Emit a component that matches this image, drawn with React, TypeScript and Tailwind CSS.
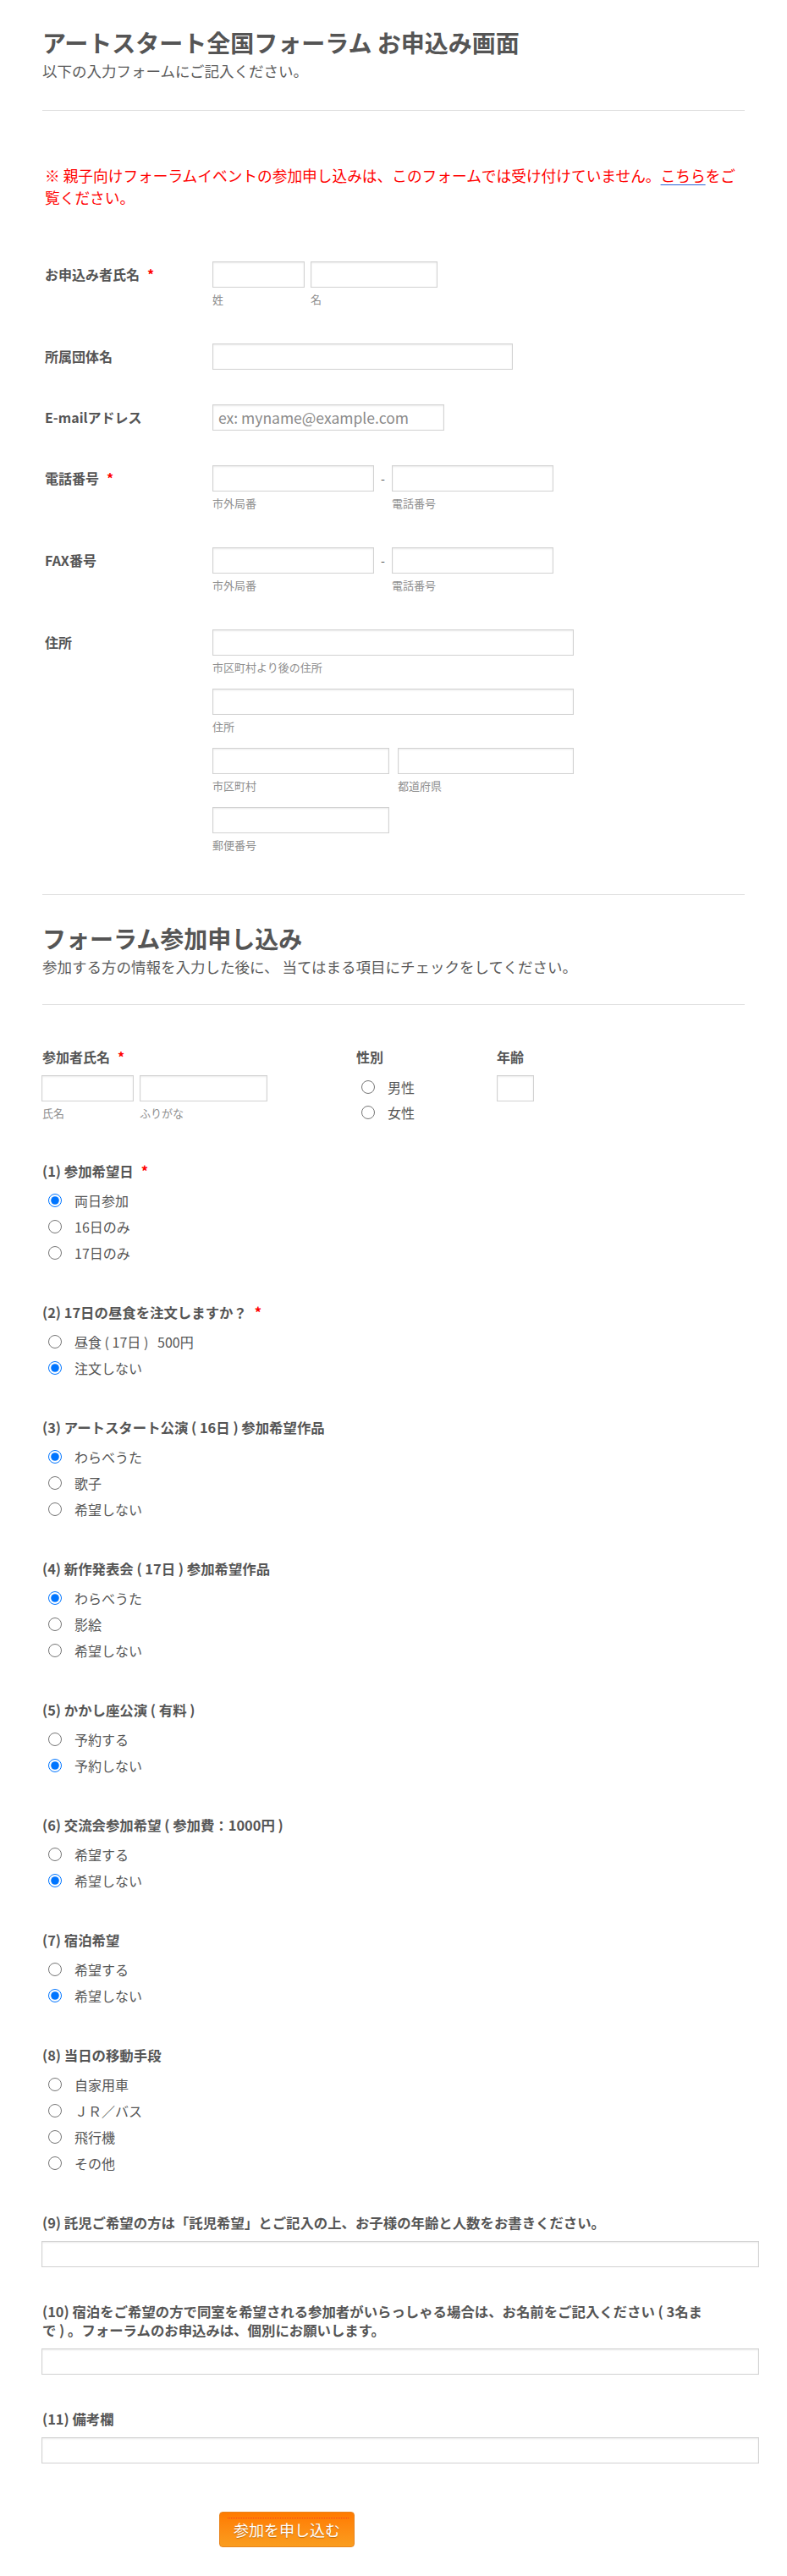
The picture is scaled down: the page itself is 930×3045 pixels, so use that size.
import React from "react";

const inputBase =
  "block h-[31px] border border-[#d2d2d2] bg-white px-[6px] text-[17.5px] text-[#555] outline-none shadow-[inset_0_1px_2px_rgba(0,0,0,0.09)]";

function Sub({ children }: { children: React.ReactNode }) {
  return <div className="mt-[3px] text-[13px] leading-[22px] text-[#8f8f8f]">{children}</div>;
}

function Req() {
  return <span className="ml-[9px] text-[#f00]">*</span>;
}

function Row({ label, req, children }: { label: string; req?: boolean; children: React.ReactNode }) {
  return (
    <div className="flex items-start">
      <div className="w-[198px] shrink-0 text-[16px] font-bold leading-[30px] text-[#555]">
        {label}
        {req && <Req />}
      </div>
      <div>{children}</div>
    </div>
  );
}

function Radio({ name, label, checked }: { name: string; label: string; checked?: boolean }) {
  return (
    <label className="flex h-[31px] items-center">
      <input type="radio" name={name} defaultChecked={checked} className="m-0 ml-[7px] h-4 w-4 shrink-0" />
      <span className="ml-[15px] whitespace-pre text-[16px] text-[#555]">{label}</span>
    </label>
  );
}

function RadioQ({
  name,
  title,
  req,
  options,
  checked,
}: {
  name: string;
  title: string;
  req?: boolean;
  options: string[];
  checked?: number;
}) {
  return (
    <div>
      <div className="text-[16.4px] font-bold leading-[22px] text-[#555]">
        {title}
        {req && <Req />}
      </div>
      <div className="mt-[8px]">
        {options.map((o, i) => (
          <Radio key={o} name={name} label={o} checked={checked === i} />
        ))}
      </div>
    </div>
  );
}

function TextQ({ title }: { title: React.ReactNode }) {
  return (
    <div>
      <div className="text-[16.4px] font-bold leading-[22px] text-[#555]">{title}</div>
      <input type="text" className={`${inputBase} mt-[11px] w-[848px] -ml-px`} />
    </div>
  );
}

export default function App() {
  return (
    <div className="min-h-[3045px] w-[930px] bg-white px-[50px] pt-[33px] pb-[33px] font-['Noto_Sans_CJK_JP',sans-serif] text-[#555]">
      {/* Header */}
      <h1 className="text-[28px] font-bold leading-[34px] text-[#555]">アートスタート全国フォーラム お申込み画面</h1>
      <p className="mt-[5px] text-[17.5px] leading-[24px] text-[#5a5a5a]">以下の入力フォームにご記入ください。</p>
      <div className="mt-[34px] h-px bg-[#dedede]" />

      <p className="mt-[63px] pl-[3px] text-[17.7px] leading-[26px] text-[#f00]">
        ※ 親子向けフォーラムイベントの参加申し込みは、このフォームでは受け付けていません。
        <span className="underline decoration-[#2a62d6] underline-offset-[3px]">こちら</span>
        をご覧ください。
      </p>

      {/* Section 1 */}
      <div className="mt-[63px] flex flex-col gap-[41px] pl-[3px]">
        <Row label="お申込み者氏名" req>
          <div className="flex gap-[7px]">
            <div>
              <input type="text" className={`${inputBase} w-[109px]`} />
              <Sub>姓</Sub>
            </div>
            <div>
              <input type="text" className={`${inputBase} w-[150px]`} />
              <Sub>名</Sub>
            </div>
          </div>
        </Row>
        <Row label="所属団体名">
          <input type="text" className={`${inputBase} w-[355px]`} />
        </Row>
        <Row label="E-mailアドレス">
          <input
            type="text"
            placeholder="ex: myname@example.com"
            className={`${inputBase} w-[274px] placeholder:text-[#8a8a8a]`}
          />
        </Row>
        <Row label="電話番号" req>
          <div className="flex">
            <div>
              <input type="text" className={`${inputBase} w-[191px]`} />
              <Sub>市外局番</Sub>
            </div>
            <div className="flex h-[31px] w-[21px] items-center justify-center text-[14px] text-[#555]">-</div>
            <div>
              <input type="text" className={`${inputBase} w-[191px]`} />
              <Sub>電話番号</Sub>
            </div>
          </div>
        </Row>
        <Row label="FAX番号">
          <div className="flex">
            <div>
              <input type="text" className={`${inputBase} w-[191px]`} />
              <Sub>市外局番</Sub>
            </div>
            <div className="flex h-[31px] w-[21px] items-center justify-center text-[14px] text-[#555]">-</div>
            <div>
              <input type="text" className={`${inputBase} w-[191px]`} />
              <Sub>電話番号</Sub>
            </div>
          </div>
        </Row>
        <Row label="住所">
          <div className="flex flex-col gap-[14px]">
            <div>
              <input type="text" className={`${inputBase} w-[427px]`} />
              <Sub>市区町村より後の住所</Sub>
            </div>
            <div>
              <input type="text" className={`${inputBase} w-[427px]`} />
              <Sub>住所</Sub>
            </div>
            <div className="flex gap-[10px]">
              <div>
                <input type="text" className={`${inputBase} w-[209px]`} />
                <Sub>市区町村</Sub>
              </div>
              <div>
                <input type="text" className={`${inputBase} w-[208px]`} />
                <Sub>都道府県</Sub>
              </div>
            </div>
            <div>
              <input type="text" className={`${inputBase} w-[209px]`} />
              <Sub>郵便番号</Sub>
            </div>
          </div>
        </Row>
      </div>

      <div className="mt-[47px] h-px bg-[#dedede]" />

      {/* Section 2 header */}
      <h2 className="mt-[34px] text-[28px] font-bold leading-[34px] text-[#555]">フォーラム参加申し込み</h2>
      <p className="mt-[5px] text-[17.5px] leading-[24px] text-[#5a5a5a]">
        参加する方の情報を入力した後に、 当てはまる項目にチェックをしてください。
      </p>
      <div className="mt-[32px] h-px bg-[#dedede]" />

      {/* Participant row */}
      <div className="mt-[50px] flex items-start">
        <div className="w-[371px] shrink-0">
          <div className="text-[16px] font-bold leading-[22px] text-[#555]">
            参加者氏名
            <Req />
          </div>
          <div className="mt-[11px] flex gap-[7px]">
            <div>
              <input type="text" className={`${inputBase} -ml-px w-[109px]`} />
              <Sub>氏名</Sub>
            </div>
            <div>
              <input type="text" className={`${inputBase} w-[151px]`} />
              <Sub>ふりがな</Sub>
            </div>
          </div>
        </div>
        <div className="w-[166px] shrink-0">
          <div className="text-[16px] font-bold leading-[22px] text-[#555]">性別</div>
          <div className="mt-[10px]">
            <label className="flex h-[30px] items-center">
              <input type="radio" name="sex" className="m-0 ml-[6px] h-4 w-4 shrink-0" />
              <span className="ml-[15px] text-[16px] text-[#555]">男性</span>
            </label>
            <label className="flex h-[30px] items-center">
              <input type="radio" name="sex" className="m-0 ml-[6px] h-4 w-4 shrink-0" />
              <span className="ml-[15px] text-[16px] text-[#555]">女性</span>
            </label>
          </div>
        </div>
        <div>
          <div className="text-[16px] font-bold leading-[22px] text-[#555]">年齢</div>
          <input type="text" className={`${inputBase} mt-[11px] w-[44px]`} />
        </div>
      </div>

      {/* Radio questions */}
      <div className="mt-[43px] flex flex-col gap-[44px]">
        <RadioQ name="q1" title="(1) 参加希望日" req options={["両日参加", "16日のみ", "17日のみ"]} checked={0} />
        <RadioQ
          name="q2"
          title="(2) 17日の昼食を注文しますか？"
          req
          options={["昼食 ( 17日 )   500円", "注文しない"]}
          checked={1}
        />
        <RadioQ
          name="q3"
          title="(3) アートスタート公演 ( 16日 ) 参加希望作品"
          options={["わらべうた", "歌子", "希望しない"]}
          checked={0}
        />
        <RadioQ
          name="q4"
          title="(4) 新作発表会 ( 17日 ) 参加希望作品"
          options={["わらべうた", "影絵", "希望しない"]}
          checked={0}
        />
        <RadioQ name="q5" title="(5) かかし座公演 ( 有料 )" options={["予約する", "予約しない"]} checked={1} />
        <RadioQ name="q6" title="(6) 交流会参加希望 ( 参加費：1000円 )" options={["希望する", "希望しない"]} checked={1} />
        <RadioQ name="q7" title="(7) 宿泊希望" options={["希望する", "希望しない"]} checked={1} />
        <RadioQ name="q8" title="(8) 当日の移動手段" options={["自家用車", "ＪＲ／バス", "飛行機", "その他"]} />
      </div>

      {/* Text questions */}
      <div className="mt-[44px] flex flex-col gap-[41px]">
        <TextQ title="(9) 託児ご希望の方は「託児希望」とご記入の上、お子様の年齢と人数をお書きください。" />
        <TextQ
          title={
            <>
              (10) 宿泊をご希望の方で同室を希望される参加者がいらっしゃる場合は、お名前をご記入ください ( 3名ま
              <br />
              で ) 。フォーラムのお申込みは、個別にお願いします。
            </>
          }
        />
        <TextQ title="(11) 備考欄" />
      </div>

      {/* Submit */}
      <div className="mt-[57px] pl-[209px]">
        <button
          type="button"
          className="relative h-[42px] w-[160px] rounded-[4px] border border-[#e8841c] bg-linear-to-b from-[#ff7a00] to-[#fa9d1e] text-[18px] text-white [text-shadow:0_1px_1px_rgba(0,0,0,0.25)]"
        >
          <span className="absolute left-[9px] right-[6px] top-[6px] border-t border-dotted border-[#ff3b1f]" />
          参加を申し込む
        </button>
      </div>
    </div>
  );
}
